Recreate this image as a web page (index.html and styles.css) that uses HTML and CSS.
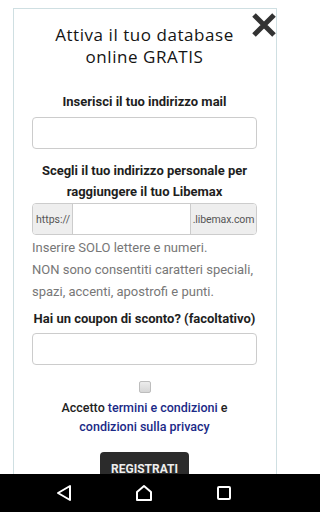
FILE: index.html
```html
<!DOCTYPE html>
<html lang="it">
<head>
<meta charset="utf-8">
<link rel="stylesheet" href="styles.css">
</head>
<body>
<div class="card">
  <button class="close" aria-label="Chiudi">
    <svg width="26" height="24" viewBox="0 0 26 24"><path d="M3 2 L23 22 M23 2 L3 22" stroke="#333" stroke-width="5" stroke-linecap="butt" fill="none"/></svg>
  </button>
  <h1 class="title">Attiva il tuo database<br>online GRATIS</h1>

  <label class="lbl lbl-first">Inserisci il tuo indirizzo mail</label>
  <input class="field" type="text">

  <label class="lbl lbl-second">Scegli il tuo indirizzo personale per<br>raggiungere il tuo Libemax</label>
  <div class="group">
    <span class="addon addon-left">https://</span>
    <input class="group-input" type="text">
    <span class="addon addon-right">.libemax.com</span>
  </div>
  <p class="help">Inserire SOLO lettere e numeri.<br>NON sono consentiti caratteri speciali,<br>spazi, accenti, apostrofi e punti.</p>

  <label class="lbl lbl-third">Hai un coupon di sconto? (facoltativo)</label>
  <input class="field" type="text">

  <div class="check"><span class="box"></span></div>
  <p class="accept">Accetto <a href="#">termini e condizioni</a> e<br><a href="#">condizioni sulla privacy</a></p>

  <div class="btn-row"><button class="btn">REGISTRATI</button></div>
</div>

<nav class="navbar">
  <svg class="nav-icon" width="16" height="18" viewBox="0 0 16 18"><path d="M14 2 L14 16 L2 9 Z" fill="none" stroke="#fff" stroke-width="2" stroke-linejoin="round"/></svg>
  <svg class="nav-icon" width="18" height="18" viewBox="0 0 18 18"><path d="M2 8 L9 2 L16 8 L16 16 L2 16 Z" fill="none" stroke="#fff" stroke-width="2" stroke-linejoin="round"/></svg>
  <svg class="nav-icon" width="16" height="16" viewBox="0 0 16 16"><rect x="2" y="2" width="12" height="12" rx="1" fill="none" stroke="#fff" stroke-width="2"/></svg>
</nav>
</body>
</html>
```

FILE: styles.css
```css
* { box-sizing: border-box; }
html {
  margin: 0;
  padding: 0;
  height: 512px;
  overflow: hidden;
  background: #fff;
}
body {
  margin: 0;
  padding: 0;
  height: 512px;
  overflow: hidden;
  font-family: Roboto, "Liberation Sans", sans-serif;
  color: #222;
}
.card {
  position: relative;
  margin: 8px 0 0 13px;
  width: 264px;
  height: 504px;
  border: 1px solid #cfdfe2;
  border-bottom: none;
  padding: 0 19px 0 18px;
  display: flex;
  flex-direction: column;
}
.close {
  position: absolute;
  top: 4px;
  right: -1px;
  width: 26px;
  height: 24px;
  padding: 0;
  border: none;
  background: transparent;
}
.close svg { display: block; }
.title {
  margin: 15px 0 0;
  font-family: "Open Sans", "DejaVu Sans", sans-serif;
  font-weight: 500;
  font-size: 17px;
  letter-spacing: 0.55px;
  line-height: 22px;
  text-align: center;
  color: #141414;
}
.lbl {
  display: block;
  text-align: center;
  font-weight: 700;
  font-size: 13px;
  line-height: 21px;
  color: #1e1e1e;
}
.lbl-first { margin-top: 23px; margin-bottom: 5px; }
.lbl-second { margin-top: 11px; margin-bottom: 0; }
.lbl-third { margin-top: 5px; margin-bottom: 4px; }
.field {
  display: block;
  width: 100%;
  height: 32px;
  border: 1px solid #cccccc;
  border-radius: 4px;
  background: #fff;
  margin: 0;
}
.group {
  display: flex;
  height: 32px;
  margin-top: 1px;
  border: 1px solid #cccccc;
  border-radius: 4px;
  overflow: hidden;
}
.addon {
  display: flex;
  align-items: center;
  background: #eeeeee;
  color: #555;
  font-size: 10.5px;
  padding: 0 3px;
  white-space: nowrap;
}
.addon-left { width: 40px; border-right: 1px solid #cccccc; }
.addon-right {
  width: 66px;
  border-left: 1px solid #cccccc;
  padding: 0 1px 0 1px;
  justify-content: center;
  letter-spacing: -0.1px;
}
.group-input {
  flex: 1;
  min-width: 0;
  width: 10px;
  border: none;
  margin: 0;
  background: #fff;
}
.help {
  margin: 2px 0 0;
  font-size: 13px;
  line-height: 22px;
  color: #777777;
  font-weight: 400;
}
.check {
  display: flex;
  justify-content: center;
  margin-top: 16px;
}
.box {
  width: 12px;
  height: 12px;
  border: 1px solid #bdbdbd;
  border-radius: 2px;
  background: linear-gradient(#ececec, #d6d6d6);
}
.accept {
  margin: 5px 0 0;
  text-align: center;
  font-size: 12.5px;
  line-height: 19px;
  font-weight: 500;
  color: #222;
}
.accept a {
  color: #1b2a87;
  text-decoration: none;
}
.btn-row {
  display: flex;
  justify-content: center;
  margin-top: 16px;
}
.btn {
  width: 89px;
  height: 36px;
  background: #2b2b2b;
  color: #eeeeee;
  border: none;
  border-radius: 4px;
  font-family: Roboto, "Liberation Sans", sans-serif;
  font-weight: 700;
  font-size: 12px;
  padding-bottom: 4px;
}
.navbar {
  position: fixed;
  left: 0;
  right: 0;
  bottom: 0;
  height: 38px;
  background: #000;
  display: flex;
  align-items: center;
  gap: 63px;
  padding-left: 56px;
}
.nav-icon { display: block; flex: none; }
```
